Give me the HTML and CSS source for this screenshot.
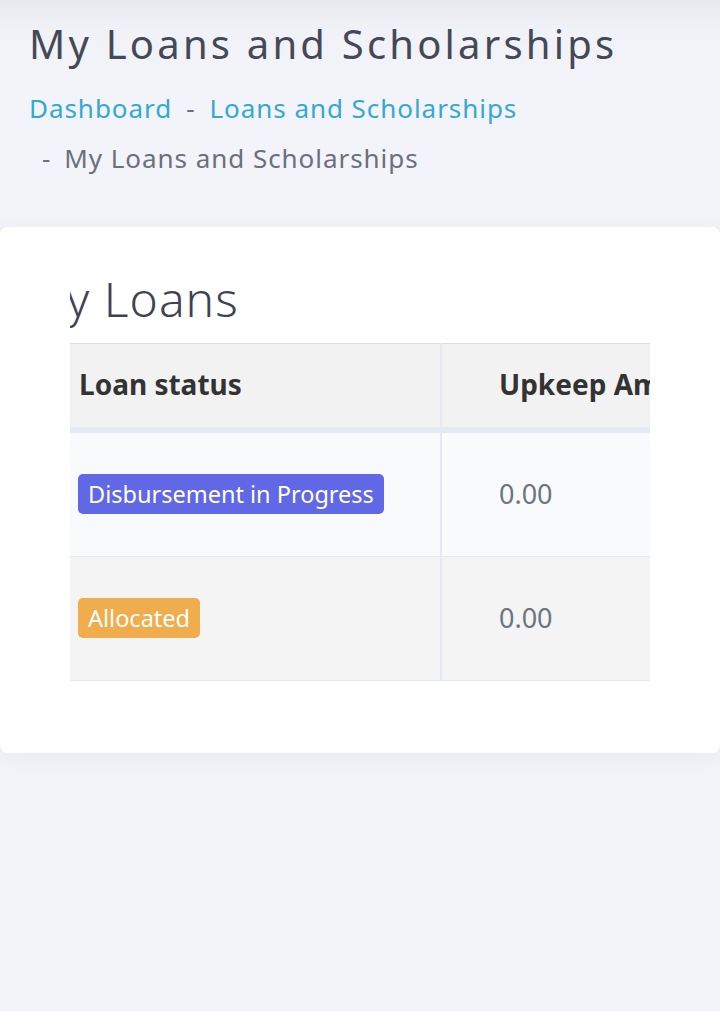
FILE: index.html
```html
<!DOCTYPE html>
<html lang="en">
<head>
    <meta charset="UTF-8">
    <meta name="viewport" content="width=device-width, initial-scale=1.0">
    <title>My Loans and Scholarships</title>
    <link rel="stylesheet" href="styles.css">
</head>
<body>
    <div class="page-header">
        <h1>My Loans and Scholarships</h1>
        <ul class="breadcrumb">
            <li><a href="#">Dashboard</a></li>
            <li><a href="#">Loans and Scholarships</a></li>
            <li class="active">My Loans and Scholarships</li>
        </ul>
    </div>

    <div class="card">
        <div class="scroll-area">
            <h2>My Loans</h2>
            <table class="loans">
                <thead>
                    <tr>
                        <th class="col-status">Loan status</th>
                        <th class="col-amount">Upkeep Amount</th>
                    </tr>
                </thead>
                <tbody>
                    <tr>
                        <td class="col-status"><span class="badge badge-progress">Disbursement in Progress</span></td>
                        <td class="col-amount">0.00</td>
                    </tr>
                    <tr>
                        <td class="col-status"><span class="badge badge-allocated">Allocated</span></td>
                        <td class="col-amount">0.00</td>
                    </tr>
                </tbody>
            </table>
        </div>
    </div>
</body>
</html>
```

FILE: styles.css
```css
body {
    margin: 0;
    min-height: 1011px;
    font-family: "Noto Sans", Arial, sans-serif;
    background: linear-gradient(to bottom, #e8e9ef 0, #f1f2f7 30px, #f3f4f9 80px);
    color: #474a5a;
}
.page-header {
    padding: 19px 29px 0;
}
h1 {
    margin: 0;
    font-size: 40px;
    font-weight: 400;
    line-height: 50px;
    letter-spacing: 3.2px;
    color: #454857;
}
.breadcrumb {
    list-style: none;
    margin: 14px 0 0;
    padding: 0;
    display: flex;
    flex-wrap: wrap;
    font-size: 26px;
    line-height: 50px;
    letter-spacing: 0.95px;
}
.breadcrumb li + li::before {
    content: "-";
    padding: 0 14px;
    color: #6c6f7d;
}
.breadcrumb li:last-child::before {
    padding: 0 13px;
}
.breadcrumb a {
    color: #34a8d4;
    text-decoration: none;
}
.breadcrumb .active {
    color: #6c6f7d;
}
.card {
    margin-top: 44px;
    height: 526px;
    box-sizing: border-box;
    padding-top: 42px;
    background-color: #fff;
    border-radius: 8px;
    box-shadow: 0 4px 24px rgba(60, 70, 110, 0.06);
}
.scroll-area {
    margin: 0 70px;
    overflow: hidden;
}
h2 {
    margin: 0 0 14px -46px;
    font-size: 48px;
    font-weight: 300;
    line-height: 60px;
    letter-spacing: 1px;
    white-space: nowrap;
    color: #3f4254;
}
.loans {
    border-collapse: collapse;
    width: 780px;
}
.loans th {
    height: 79px;
    padding: 0 9px 4px;
    text-align: left;
    font-size: 28px;
    font-weight: 700;
    color: #333;
    background-color: #f2f2f2;
    border-top: 1px solid #dedede;
    border-bottom: 6px solid #e3eaf2;
}
.loans td {
    height: 121px;
    padding: 0 8px 2px;
    font-size: 27px;
    color: #6c757d;
    border-bottom: 1px solid #e3eaf2;
}
.loans tbody tr:nth-child(1) {
    background-color: #f9fafc;
}
.loans tbody tr:nth-child(2) {
    background-color: #f4f4f4;
}
.loans .col-status {
    width: 371px;
    box-sizing: border-box;
    border-right: 2px solid #e3eaf2;
}
.loans .col-amount {
    padding-left: 57px;
    white-space: nowrap;
}
.badge {
    display: inline-block;
    padding: 0 10px;
    line-height: 40px;
    font-size: 23.5px;
    color: #fff;
    border-radius: 5px;
}
.badge-progress {
    background-color: #6068e6;
}
.badge-allocated {
    background-color: #f0ad4e;
}
```
